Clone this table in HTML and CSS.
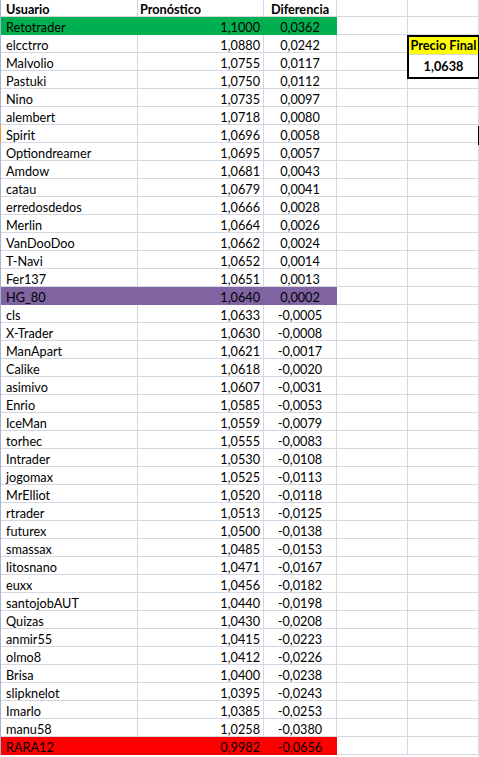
FILE: index.html
```html
<!DOCTYPE html>
<html lang="es">
<head>
<meta charset="utf-8">
<title>Pronósticos</title>
<link rel="stylesheet" href="styles.css">
</head>
<body>
<div class="sheet">
  <div class="row head">
    <div class="c a b">Usuario</div>
    <div class="c p b">Pronóstico</div>
    <div class="c d b">Diferencia</div>
    <div class="c e"></div>
    <div class="c f"></div>
  </div>
  <div class="row green"><div class="c a">Retotrader</div><div class="c p">1,1000</div><div class="c d">0,0362</div><div class="c e"></div><div class="c f"></div></div>
  <div class="row"><div class="c a">elcctrro</div><div class="c p">1,0880</div><div class="c d">0,0242</div><div class="c e"></div><div class="c f"></div></div>
  <div class="row"><div class="c a">Malvolio</div><div class="c p">1,0755</div><div class="c d">0,0117</div><div class="c e"></div><div class="c f"></div></div>
  <div class="row"><div class="c a">Pastuki</div><div class="c p">1,0750</div><div class="c d">0,0112</div><div class="c e"></div><div class="c f"></div></div>
  <div class="row"><div class="c a">Nino</div><div class="c p">1,0735</div><div class="c d">0,0097</div><div class="c e"></div><div class="c f"></div></div>
  <div class="row"><div class="c a">alembert</div><div class="c p">1,0718</div><div class="c d">0,0080</div><div class="c e"></div><div class="c f"></div></div>
  <div class="row sel"><div class="c a">Spirit</div><div class="c p">1,0696</div><div class="c d">0,0058</div><div class="c e"></div><div class="c f"></div></div>
  <div class="row"><div class="c a">Optiondreamer</div><div class="c p">1,0695</div><div class="c d">0,0057</div><div class="c e"></div><div class="c f"></div></div>
  <div class="row"><div class="c a">Amdow</div><div class="c p">1,0681</div><div class="c d">0,0043</div><div class="c e"></div><div class="c f"></div></div>
  <div class="row"><div class="c a">catau</div><div class="c p">1,0679</div><div class="c d">0,0041</div><div class="c e"></div><div class="c f"></div></div>
  <div class="row"><div class="c a">erredosdedos</div><div class="c p">1,0666</div><div class="c d">0,0028</div><div class="c e"></div><div class="c f"></div></div>
  <div class="row"><div class="c a">Merlin</div><div class="c p">1,0664</div><div class="c d">0,0026</div><div class="c e"></div><div class="c f"></div></div>
  <div class="row"><div class="c a">VanDooDoo</div><div class="c p">1,0662</div><div class="c d">0,0024</div><div class="c e"></div><div class="c f"></div></div>
  <div class="row"><div class="c a">T-Navi</div><div class="c p">1,0652</div><div class="c d">0,0014</div><div class="c e"></div><div class="c f"></div></div>
  <div class="row"><div class="c a">Fer137</div><div class="c p">1,0651</div><div class="c d">0,0013</div><div class="c e"></div><div class="c f"></div></div>
  <div class="row purple"><div class="c a">HG_80</div><div class="c p">1,0640</div><div class="c d">0,0002</div><div class="c e"></div><div class="c f"></div></div>
  <div class="row"><div class="c a">cls</div><div class="c p">1,0633</div><div class="c d">-0,0005</div><div class="c e"></div><div class="c f"></div></div>
  <div class="row"><div class="c a">X-Trader</div><div class="c p">1,0630</div><div class="c d">-0,0008</div><div class="c e"></div><div class="c f"></div></div>
  <div class="row"><div class="c a">ManApart</div><div class="c p">1,0621</div><div class="c d">-0,0017</div><div class="c e"></div><div class="c f"></div></div>
  <div class="row"><div class="c a">Calike</div><div class="c p">1,0618</div><div class="c d">-0,0020</div><div class="c e"></div><div class="c f"></div></div>
  <div class="row"><div class="c a">asimivo</div><div class="c p">1,0607</div><div class="c d">-0,0031</div><div class="c e"></div><div class="c f"></div></div>
  <div class="row"><div class="c a">Enrio</div><div class="c p">1,0585</div><div class="c d">-0,0053</div><div class="c e"></div><div class="c f"></div></div>
  <div class="row"><div class="c a">IceMan</div><div class="c p">1,0559</div><div class="c d">-0,0079</div><div class="c e"></div><div class="c f"></div></div>
  <div class="row"><div class="c a">torhec</div><div class="c p">1,0555</div><div class="c d">-0,0083</div><div class="c e"></div><div class="c f"></div></div>
  <div class="row"><div class="c a">Intrader</div><div class="c p">1,0530</div><div class="c d">-0,0108</div><div class="c e"></div><div class="c f"></div></div>
  <div class="row"><div class="c a">jogomax</div><div class="c p">1,0525</div><div class="c d">-0,0113</div><div class="c e"></div><div class="c f"></div></div>
  <div class="row"><div class="c a">MrElliot</div><div class="c p">1,0520</div><div class="c d">-0,0118</div><div class="c e"></div><div class="c f"></div></div>
  <div class="row"><div class="c a">rtrader</div><div class="c p">1,0513</div><div class="c d">-0,0125</div><div class="c e"></div><div class="c f"></div></div>
  <div class="row"><div class="c a">futurex</div><div class="c p">1,0500</div><div class="c d">-0,0138</div><div class="c e"></div><div class="c f"></div></div>
  <div class="row"><div class="c a">smassax</div><div class="c p">1,0485</div><div class="c d">-0,0153</div><div class="c e"></div><div class="c f"></div></div>
  <div class="row"><div class="c a">litosnano</div><div class="c p">1,0471</div><div class="c d">-0,0167</div><div class="c e"></div><div class="c f"></div></div>
  <div class="row"><div class="c a">euxx</div><div class="c p">1,0456</div><div class="c d">-0,0182</div><div class="c e"></div><div class="c f"></div></div>
  <div class="row"><div class="c a">santojobAUT</div><div class="c p">1,0440</div><div class="c d">-0,0198</div><div class="c e"></div><div class="c f"></div></div>
  <div class="row"><div class="c a">Quizas</div><div class="c p">1,0430</div><div class="c d">-0,0208</div><div class="c e"></div><div class="c f"></div></div>
  <div class="row"><div class="c a">anmir55</div><div class="c p">1,0415</div><div class="c d">-0,0223</div><div class="c e"></div><div class="c f"></div></div>
  <div class="row"><div class="c a">olmo8</div><div class="c p">1,0412</div><div class="c d">-0,0226</div><div class="c e"></div><div class="c f"></div></div>
  <div class="row"><div class="c a">Brisa</div><div class="c p">1,0400</div><div class="c d">-0,0238</div><div class="c e"></div><div class="c f"></div></div>
  <div class="row"><div class="c a">slipknelot</div><div class="c p">1,0395</div><div class="c d">-0,0243</div><div class="c e"></div><div class="c f"></div></div>
  <div class="row"><div class="c a">Imarlo</div><div class="c p">1,0385</div><div class="c d">-0,0253</div><div class="c e"></div><div class="c f"></div></div>
  <div class="row"><div class="c a">manu58</div><div class="c p">1,0258</div><div class="c d">-0,0380</div><div class="c e"></div><div class="c f"></div></div>
  <div class="row red"><div class="c a">RARA12</div><div class="c p">0,9982</div><div class="c d">-0,0656</div><div class="c e"></div><div class="c f"></div></div>

  <div class="price">
    <div class="price-label">Precio Final</div>
    <div class="price-value">1,0638</div>
  </div>
  <div class="cursor"></div>
</div>
</body>
</html>
```

FILE: styles.css
```css
html, body {
  margin: 0;
  padding: 0;
  background: #ffffff;
}

body {
  width: 479px;
  height: 757px;
  overflow: hidden;
  font-family: Lato, "Liberation Sans", sans-serif;
  font-size: 12.7px;
  color: #000000;
}

.sheet {
  position: relative;
  display: flex;
  flex-direction: column;
  border-left: 1px solid #9eb6ce;
}

.row {
  display: grid;
  grid-template-columns: 137px 126px 73px 71px 71px;
  height: 18px;
}

.row.head {
  margin-top: -1px;
}

.c {
  box-sizing: border-box;
  height: 18px;
  border-right: 1px solid #d4d7e0;
  border-bottom: 1px solid #d4d7e0;
  line-height: 21px;
  white-space: nowrap;
  overflow: hidden;
}

.c.a {
  padding-left: 5px;
}

.c.p {
  text-align: right;
  padding-right: 3px;
}

.c.d {
  text-align: center;
}

.head .c.p {
  text-align: left;
  padding-left: 2px;
}

.b {
  font-weight: 700;
}

.green .a, .green .p, .green .d {
  background: #00b050;
  border-color: #00b050;
}

.purple .a, .purple .p, .purple .d {
  background: #8064a2;
  border-color: #8064a2;
}

.red .a, .red .p, .red .d {
  background: #ff0000;
  border-color: #ff0000;
}

.sheet .sel {
  box-shadow: -1px 0 0 #f29436;
}

.price {
  position: absolute;
  left: 406px;
  top: 35px;
  width: 69px;
  border: 2px solid #000000;
  font-weight: 700;
  text-align: center;
  background: #ffffff;
}

.price-label {
  background: #ffff00;
  height: 17px;
  line-height: 17px;
  border-bottom: 1px solid #d4d7e0;
}

.price-value {
  height: 22px;
  line-height: 22px;
}

.cursor {
  position: absolute;
  left: 477px;
  top: 126px;
  width: 2px;
  height: 19px;
  background: #000000;
}
```
